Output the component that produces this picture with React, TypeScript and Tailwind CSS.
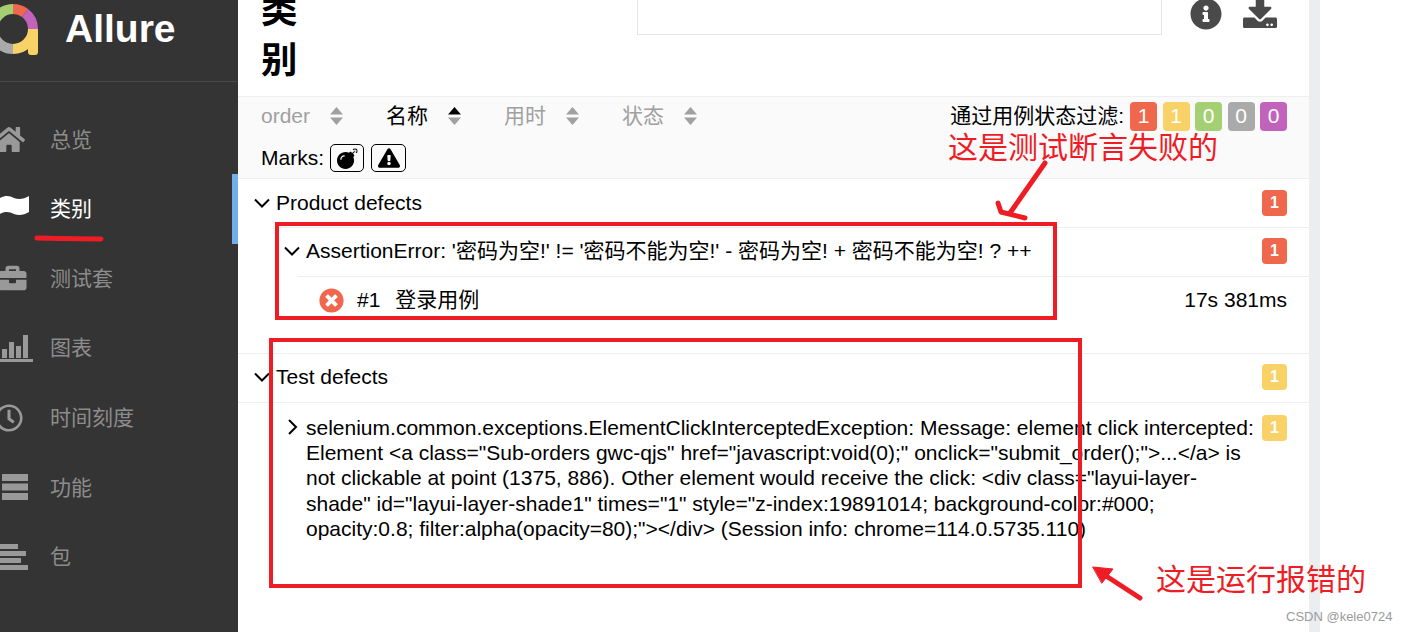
import type { ReactNode } from "react";
import {
  FaBomb,
  FaBriefcase,
  FaDownload,
  FaExclamationTriangle,
  FaHome,
  FaInfoCircle,
  FaRegClock,
  FaTimesCircle,
} from "react-icons/fa";

const menu = [
  { label: "总览", icon: <FaHome className="-ml-[7px] h-[29px] w-[32px]" /> },
  {
    label: "类别",
    icon: (
      <svg viewBox="0 0 29 21" className="-mt-[6px] h-[21px] w-[29px]" fill="currentColor">
        <path d="M0 3C6 0 10 1 14 3C19 5 24 4 29 1V17C24 20 19 21 14 19C10 17 5 16 0 19z" />
      </svg>
    ),
    active: true,
  },
  { label: "测试套", icon: <FaBriefcase className="-ml-[4px] h-[28px] w-[33px]" /> },
  {
    label: "图表",
    icon: (
      <svg viewBox="0 0 33 28" className="h-[28px] w-[33px]" fill="currentColor">
        <path d="M2 15h5v9H2zM9 8h5v16H9zM16 12h5v12h-5zM23 1h5v23h-5zM0 25h33v3H0z" />
      </svg>
    ),
  },
  { label: "时间刻度", icon: <FaRegClock className="-ml-[5px] h-[28px] w-[28px]" /> },
  {
    label: "功能",
    icon: (
      <svg viewBox="0 0 28 26" className="h-[26px] w-[28px]" fill="currentColor">
        <path d="M2 0h26v7H2zM2 9.500h26v7H2zM2 19h26v7H2z" />
      </svg>
    ),
  },
  {
    label: "包",
    icon: (
      <svg viewBox="0 0 28 26" className="h-[26px] w-[28px]" fill="currentColor">
        <path d="M0 0h18v5H0zM0 7h26v5H0zM0 14h21v5H0zM0 21h28v5H0z" />
      </svg>
    ),
  },
];

const sorters = [
  { label: "order", width: "w-[125px]" },
  { label: "名称", width: "w-[118px]", active: true },
  { label: "用时", width: "w-[118px]" },
  { label: "状态", width: "w-[118px]" },
];

const filters = [
  { value: 1, color: "bg-[#ef674c]" },
  { value: 1, color: "bg-[#f8d167]" },
  { value: 0, color: "bg-[#a5cf73]" },
  { value: 0, color: "bg-[#aaaaaa]" },
  { value: 0, color: "bg-[#c263bb]" },
];

function Logo() {
  return (
    <svg viewBox="0 0 51 51" className="-ml-[12px] h-[51px] w-[51px] shrink-0" fill="none" strokeWidth="10">
      <path d="M5 25A20 20 0 0 1 25 5" stroke="#a5cf73" />
      <path d="M25 5A20 20 0 0 1 37.04 9.03" stroke="#ef674c" />
      <path d="M37.04 9.03A20 20 0 0 1 45 25" stroke="#c263bb" />
      <path d="M45 25A20 20 0 0 1 25 45" stroke="#f8d167" />
      <path d="M25 45A20 20 0 0 1 5 25" stroke="#aaaaaa" />
      <rect x="40" y="25" width="10" height="26" rx="3" fill="#f8d167" />
    </svg>
  );
}

function SortIcon({ active }: { active?: boolean }) {
  return (
    <svg viewBox="0 0 13 18" className="h-[18px] w-[13px]">
      <path d="M6.5 0L13 7.500H0z" fill={active ? "#000" : "#a0a0a0"} />
      <path d="M6.5 18L13 10.500H0z" fill="#a0a0a0" />
    </svg>
  );
}

function Chevron({ right }: { right?: boolean }) {
  return (
    <svg viewBox="0 0 16 16" className="h-4 w-4 shrink-0" fill="none" stroke="#000" strokeWidth="2">
      <path d={right ? "M5 1l7 7-7 7" : "M1 4.500l7 7 7-7"} />
    </svg>
  );
}

function Count({ value, color }: { value: number; color: string }) {
  return (
    <span
      className={`flex h-[26px] w-[25px] shrink-0 items-center justify-center rounded-[4px] text-[16px] font-bold text-white ${color}`}
    >
      {value}
    </span>
  );
}

function Row({ className, children }: { className: string; children: ReactNode }) {
  return <div className={`flex items-center pr-[22px] ${className}`}>{children}</div>;
}

export default function App() {
  return (
    <div
      className="relative flex h-[632px] w-[1410px] overflow-hidden bg-white text-[21px] text-black"
      style={{ fontFamily: '"Liberation Sans", "Noto Sans CJK SC", sans-serif' }}
    >
      <aside className="h-full w-[238px] shrink-0 bg-[#343434]">
        <div className="flex h-[82px] items-start gap-[26px] border-b border-[#4a4a4a] pt-[4px]">
          <Logo />
          <span className="text-[39px] leading-[50px] font-bold text-white">Allure</span>
        </div>
        <nav className="pt-[22.5px]">
          {menu.map((item) => (
            <div
              key={item.label}
              className={`flex h-[69.6px] items-center border-r-[6px] ${
                item.active ? "border-[#72aeea] text-white" : "border-transparent text-[#8c8c8c]"
              }`}
            >
              <span className={`flex w-[50px] shrink-0 items-center ${item.active ? "text-white" : "text-[#999999]"}`}>
                {item.icon}
              </span>
              <span>{item.label}</span>
            </div>
          ))}
        </nav>
      </aside>

      <main className="h-full w-[1071px] shrink-0">
        <header className="flex h-[96px] items-start overflow-hidden pl-[23px]">
          <h1 className="-mt-[14px] w-[38px] text-[36.4px] leading-[50px] font-bold">类别</h1>
          <div className="-mt-px ml-[338px] h-[36px] w-[525px] border border-t-0 border-[#e5e5e5]" />
          <FaInfoCircle className="-mt-[2px] ml-[28px] h-[32px] w-[32px] text-[#4a4a4a]" />
          <FaDownload className="-mt-[6px] ml-[21px] h-[34px] w-[34px] text-[#4a4a4a]" />
        </header>

        <section className="h-[83px] border-y border-[#eeeeee] bg-[#fafafa] pr-[22px] pl-[23px]">
          <div className="flex h-[38px] items-center">
            {sorters.map((sorter) => (
              <div
                key={sorter.label}
                className={`flex items-center gap-[20px] ${sorter.width} ${sorter.active ? "text-black" : "text-[#a0a0a0]"}`}
              >
                <span>{sorter.label}</span>
                <SortIcon active={sorter.active} />
              </div>
            ))}
            <span className="ml-auto">通过用例状态过滤:</span>
            <div className="ml-[6px] flex gap-[5.5px]">
              {filters.map((filter, index) => (
                <span
                  key={index}
                  className={`flex h-[29px] w-[27px] items-center justify-center rounded-[4px] text-white ${filter.color}`}
                >
                  {filter.value}
                </span>
              ))}
            </div>
          </div>
          <div className="flex h-[43px] items-center pt-[3px]">
            <span>Marks:</span>
            <span className="ml-[6px] flex h-[28px] w-[34px] items-center justify-center rounded-[5px] border border-black">
              <FaBomb className="h-[21px] w-[21px]" />
            </span>
            <span className="ml-[7px] flex h-[28px] w-[35px] items-center justify-center rounded-[5px] border border-black">
              <FaExclamationTriangle className="h-[20px] w-[22px]" />
            </span>
          </div>
        </section>

        <Row className="h-[48px] gap-[6px] pb-[1px] pl-[16px]">
          <Chevron />
          <span className="flex-1">Product defects</span>
          <Count value={1} color="bg-[#ef674c]" />
        </Row>

        <div className="pl-[37px]">
          <Row className="h-[49px] gap-[6px] border-t border-[#eeeeee] pb-[2px] pl-[9px]">
            <Chevron />
            <span className="flex-1">AssertionError: '密码为空!' != '密码不能为空!' - 密码为空! + 密码不能为空! ? ++</span>
            <Count value={1} color="bg-[#ef674c]" />
          </Row>
          <div className="ml-[23px]">
            <Row className="h-[49px] border-t border-[#eeeeee] pb-[2px] pl-[21px]">
              <FaTimesCircle className="h-[25px] w-[25px] text-[#ef674c]" />
              <span className="ml-[13px]">#1</span>
              <span className="ml-[15px] flex-1">登录用例</span>
              <span>17s 381ms</span>
            </Row>
          </div>
        </div>

        <Row className="mt-[28px] h-[49px] gap-[6px] border-t border-[#eeeeee] pb-[2px] pl-[16px]">
          <Chevron />
          <span className="flex-1">Test defects</span>
          <Count value={1} color="bg-[#f8d167]" />
        </Row>

        <div className="flex items-start gap-[6px] border-t border-[#eeeeee] pt-[12px] pr-[22px] pl-[46px]">
          <span className="pt-[4px]">
            <Chevron right />
          </span>
          <p className="flex-1 leading-[25.2px]">
            selenium.common.exceptions.ElementClickInterceptedException: Message: element click intercepted: Element
            {' <a class="Sub-orders gwc-qjs" href="javascript:void(0);" onclick="submit_order();">...</a> is not clickable at point (1375, 886). Other element would receive the click: <div class="layui-layer-shade" id="layui-layer-shade1" times="1" style="z-index:19891014; background-color:#000; opacity:0.8; filter:alpha(opacity=80);"></div> (Session info: chrome=114.0.5735.110)'}
          </p>
          <Count value={1} color="bg-[#f8d167]" />
        </div>
      </main>

      <div className="h-full w-[11px] shrink-0 bg-[#ecedef]" />

      {/* screenshot annotations drawn on top */}
      <div className="absolute top-[222px] left-[275px] h-[98px] w-[782px] border-[4px] border-[#ee1c25]" />
      <div className="absolute top-[338px] left-[269px] h-[250px] w-[813px] border-[4px] border-[#ee1c25]" />
      <span className="absolute top-[127px] left-[948px] text-[30px] leading-[42px] text-[#ee1c25]">这是测试断言失败的</span>
      <span className="absolute top-[559px] left-[1156px] text-[30px] leading-[42px] text-[#ee1c25]">这是运行报错的</span>
      <span className="absolute top-[610px] left-[1286px] text-[13px] leading-[14px] text-[#9a9a9a]">CSDN @kele0724</span>
      <svg viewBox="0 0 1410 632" className="pointer-events-none absolute inset-0 h-[632px] w-[1410px]" fill="none" stroke="#ee1c25" strokeLinecap="round" strokeLinejoin="round">
        <path d="M37 238L60 238.5L101 239" strokeWidth="5" />
        <path d="M1045 163L1010 213" strokeWidth="5" />
        <path d="M998 203L1001 212L1025 218" strokeWidth="5" />
        <path d="M1140 598L1100 572" strokeWidth="5" />
        <path d="M1093 567L1113 569L1102 583z" fill="#ee1c25" strokeWidth="1" />
      </svg>
    </div>
  );
}
